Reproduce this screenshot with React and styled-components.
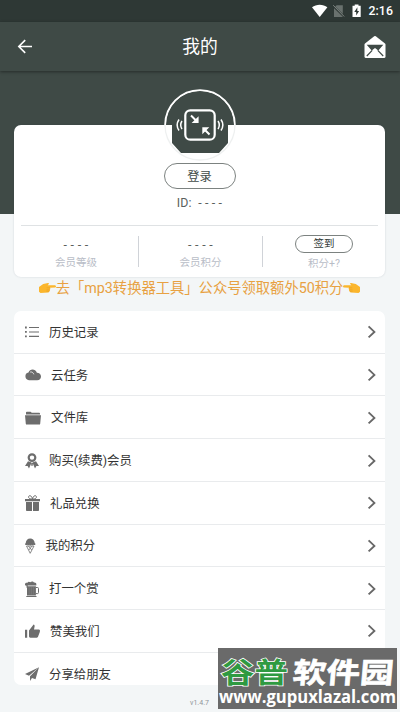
import React from 'react';
import styled, {createGlobalStyle} from 'styled-components'

const GlobalStyle = createGlobalStyle`
*{box-sizing:border-box;}
body{
margin:0;
background:#f3f6f7;
font-family:Roboto,"Noto Sans CJK SC",sans-serif;
overflow:hidden;
}
button{font-family:inherit;padding:0;}
svg{display:block;flex:none;}
`

const Page = styled.div`
position:relative;
display:flex;
flex-direction:column;
width:400px;
height:712px;
overflow:hidden;
`
const StatusBar = styled.div`
display:flex;
align-items:center;
justify-content:flex-end;
height:22px;
padding-right:7px;
background:#2e3835;
color:#fff;
font-size:12.3px;
font-weight:500;
`
const Clock = styled.span`
margin-left:6px;
letter-spacing:.1px;
`
const Toolbar = styled.header`
display:flex;
flex:none;
align-items:center;
justify-content:space-between;
height:49px;
padding:0 14px 0 17px;
background:#3f4a46;
box-shadow:0 1px 3px rgba(0,0,0,.4);
z-index:1;
`
const Title = styled.h1`
margin:0;
padding:1px 0 0 3px;
color:#fff;
font-size:17.8px;
line-height:24px;
font-weight:400;
`
const Content = styled.main`
display:flex;
flex:1;
flex-direction:column;
padding:54px 15px 0 14px;
background:linear-gradient(#3f4a46 143px,#f3f6f7 143px);
`
const Card = styled.section`
display:flex;
flex:none;
flex-direction:column;
align-items:center;
height:152px;
border-radius:7px;
background:#fff;
box-shadow:0 0 2px rgba(40,60,80,.18);
`
const Avatar = styled.div`
height:72px;
margin-top:-36px;
`
const LoginButton = styled.button`
width:72px;
height:26px;
margin-top:2px;
padding-top:2px;
border:1px solid #7c8280;
border-radius:13px;
background:#fff;
color:#414b48;
font-size:12.3px;
line-height:20px;
`
const UserId = styled.div`
height:16px;
margin-top:6px;
color:#5a5f5d;
font-size:12.4px;
line-height:16px;
letter-spacing:.15px;
white-space:pre;
`
const Divider = styled.hr`
width:357px;
height:1px;
margin:14px 0 0;
border:0;
background:#dfe2e4;
`
const Stats = styled.div`
display:grid;
grid-template-columns:125px 124px 122px;
margin-top:10px;
`
const Stat = styled.div`
display:flex;
flex-direction:column;
align-items:center;
height:31px;
border-right:${({$last})=>$last?'none':'1px solid #d0d3d8'};
color:#b9bdc7;
font-size:10.5px;
`
const StatValue = styled.span`
height:18px;
color:#5a5f5d;
font-size:12.4px;
line-height:17px;
letter-spacing:.3px;
`
const StatLabel = styled.span`
margin-top:1px;
line-height:17px;
`
const SignButton = styled.button`
height:18px;
width:58px;
margin-top:-1px;
margin-bottom:1px;
border:1px solid #7c8280;
border-radius:10px;
background:#fff;
color:#333b38;
font-size:10.5px;
line-height:16px;
`
const Notice = styled.div`
display:flex;
flex:none;
align-items:center;
justify-content:center;
height:22px;
color:#e8a142;
font-size:14.3px;
line-height:20px;
white-space:nowrap;
`
const Menu = styled.ul`
flex:none;
height:374px;
margin:12px 0 0;
padding:0;
border-radius:7px;
background:#fff;
list-style:none;
overflow:hidden;
`
const Row = styled.li`
display:flex;
align-items:center;
gap:10px;
height:42.72px;
padding:1px 7px 0 11px;
border-bottom:1px solid #e9ebed;
color:#333;
font-size:12.4px;
`
const RowLabel = styled.span`
flex:1;
padding-top:1px;
line-height:18px;
`
const Version = styled.footer`
margin-top:14px;
color:#8e9499;
font-size:7px;
line-height:9px;
text-align:center;
`
const Watermark = styled.div`
position:absolute;
left:218px;
top:648px;
display:flex;
flex-direction:column;
width:179px;
height:61px;
background:#6a6a6a;
color:#fff;
`
const SiteName = styled.svg`
width:179px;
height:42px;
overflow:visible;
font-family:"Noto Sans CJK SC",sans-serif;
font-weight:700;
font-size:28.5px;
`
const SiteUrl = styled.svg`
width:179px;
height:19px;
overflow:visible;
font-family:"Open Sans",sans-serif;
font-weight:700;
font-size:17px;
`

const Glyph = ({w,h=16,children}) => (
    <svg width={w} height={h} viewBox={`0 0 ${w} ${h}`} fill='#6d6d6d'>{children}</svg>
)

const ListIcon = () => (
    <Glyph w={14}>
        <path d='M0 2.6h1.8v1.8H0zM0 7h1.8v1.8H0zM0 11.4h1.8v1.8H0zM4 3h10v1.1H4zM4 7.4h10v1.1H4zM4 11.8h10v1.1H4z'/>
    </Glyph>
)
const CloudIcon = () => (
    <Glyph w={16}>
        <path d='M4 13.2a3.9 3.9 0 0 1-.5-7.7C4.6 1.7 10.2 1.2 11.9 5.7c2.4.1 4.1 1.6 4.1 3.8 0 2.1-1.5 3.7-3.8 3.7z'/>
        <path d='M5.2 5c1.8-.3 3.1.7 3.6 2.3' fill='none' stroke='#fff' strokeWidth='.8'/>
    </Glyph>
)
const FolderIcon = () => (
    <Glyph w={16}>
        <path d='M1 4.4V2.5c0-.5.3-.8.8-.8h3.8l1.2 1h7.4c.5 0 .8.3.8.8v.9zM0 5.3h16l-.8 8.4c0 .6-.4.9-.9.9H1.7c-.5 0-.9-.3-.9-.9z'/>
    </Glyph>
)
const MedalIcon = () => (
    <Glyph w={14}>
        <circle cx='7' cy='4.6' r='3.3' fill='none' stroke='#6d6d6d' strokeWidth='2.2'/>
        <path d='M3 8.3 0 13l2.6-.1L4 15.5 6.6 9.6zM11 8.3l3 4.7-2.6-.1-1.4 2.6-2.6-5.9zM6 10h2l-.5 3h-1z'/>
    </Glyph>
)
const GiftIcon = () => (
    <Glyph w={15}>
        <path d='M0 4.1h15v2.2H0zM1 7h6v9H1.8c-.5 0-.8-.3-.8-.8zM8 7h6v8.2c0 .5-.3.8-.8.8H8z'/>
        <path d='M7.2 4C2.8 4.4 2.8.5 5 .7 6.3.8 7.2 2.4 7.5 4 7.8 2.4 8.7.8 10 .7c2.2-.2 2.2 3.7-2.2 3.3' fill='none' stroke='#6d6d6d' strokeWidth='1'/>
    </Glyph>
)
const IceCreamIcon = () => (
    <Glyph w={10.5}>
        <path d='M.5 6.9C-.2 6.5 0 5.4.7 5.2 1 2.5 2.6.6 5.2.6s4.3 1.9 4.6 4.6c.8.2.9 1.3.2 1.7-.8.5-1.5 0-1.8-.2-.5.8-1.3.8-1.8.1-.5.8-1.7.8-2.3 0-.5.7-1.4.6-1.8-.1-.3.4-.9.6-1.8.2z'/>
        <path d='m1.5 8 3.7 7.3L9 8zM3.4 8l3.3 4M7.1 8l-3.3 4' fill='none' stroke='#6d6d6d' strokeWidth='.8'/>
    </Glyph>
)
const BeerIcon = () => (
    <Glyph w={14}>
        <path d='M0 4.2C-.3 2.5 1 1.6 2.2 1.9 2.9.6 4.4.5 5.2 1.3 6.3.1 8.4.3 8.9 1.5c1.7-.4 2.7.8 2.4 2.3v.7H2.7v2.2H1.5V4.8zM2 5.3h8.9v9.2H2zM1.3 15h10.2v1H1.3z'/>
        <path d='M11 6.5h1.5c.7 0 1 .4 1 1v4c0 .7-.4 1.1-1 1.1H11' fill='none' stroke='#6d6d6d' strokeWidth='1'/>
        <path d='M4.2 6v7.5M6.4 6v7.5M8.6 6v7.5' stroke='#858585' strokeWidth='.5'/>
    </Glyph>
)
const ThumbIcon = () => (
    <Glyph w={15}>
        <path d='M0 6.8h2.2v7.9H0zM4 7.5 8.6 1.6c.8.4 1.2 1 1 1.8L9 6.4h4.6c.9 0 1.4.6 1.4 1.4l-.2 1.2-1.7 4.6c-.2.7-.6 1.1-1.4 1.1H5.4c-.9 0-1.4-.6-1.4-1.4z'/>
    </Glyph>
)
const PlaneIcon = () => (
    <Glyph w={14}>
        <path d='M14 1.3 0 8l4 1.8zM14 1.3 5 10.2v4.7l2-3 3.5 1.4z'/>
    </Glyph>
)
const ArrowRight = () => (
    <svg width='11' height='14' viewBox='0 0 11 14' fill='none' stroke='#686868' strokeWidth='1.9'>
        <path d='m1.6 1.4 5.8 5.5-5.8 5.5'/>
    </svg>
)
const BackIcon = () => (
    <svg width='16' height='16' viewBox='0 0 16 16' fill='none' stroke='#fff' strokeWidth='1.6'>
        <path d='M15 7.5H2M8.2 1.1 1.8 7.5l6.4 6.4'/>
    </svg>
)
const MailIcon = () => (
    <svg width='22' height='24' viewBox='0 0 22 24'>
        <path d='M1 8.5 10.2 1.2q.8-.5 1.6 0L21 8.5q.5.5.5 1.3v11.7q0 1.5-1.5 1.5H2q-1.5 0-1.5-1.5V9.8Q.5 9 1 8.5z' fill='#fff'/>
        <path d='M2.7 9.8h16.6L14.3 15.6 11 12.9l-3.3 2.7z' fill='#3f4a46'/>
        <path d='m2.8 21 5.4-5.7M19.2 21l-5.4-5.7' stroke='#3f4a46' strokeWidth='1.2'/>
    </svg>
)
const StatusIcons = () => (
    <svg width='50' height='14' viewBox='0 0 50 14'>
        <path d='M0 3.3C4.2-.2 11.2-.2 15.4 3.3L7.7 13z' fill='#fff'/>
        <path d='M24.6 1.2h6.2V13H22V4z' fill='#69716e'/>
        <path d='m20.5 1.2 11.8 11.6' stroke='#2e3835' strokeWidth='2'/>
        <path d='m21.2 1.2 11 11.3' stroke='#7c8380' strokeWidth='1'/>
        <path d='M40.5 1.7h2.2V.5h3.8v1.2h2.2V13h-8.2z' fill='#fff'/>
        <path d='M45.4 3.2 42.3 8h1.9v3.5L47.1 7h-1.8z' fill='#2e3835'/>
    </svg>
)
const Logo = () => (
    <svg width='72' height='72' viewBox='0 0 72 72'>
        <circle cx='36' cy='36' r='35' fill='#fff'/>
        <path d='M2 36a34 34 0 0 1 68 0h-6v18l-9 10H17L8 54V36z' fill='#3f4a46'/>
        <path d='M1 36a35 35 0 0 1 70 0' fill='none' stroke='#fff' strokeWidth='1.6'/>
        <path d='M1 36a35 35 0 0 0 70 0' fill='none' stroke='#eef0f0' strokeWidth='1.3'/>
        <rect x='21.3' y='21.3' width='29.4' height='29.4' rx='5' fill='none' stroke='#fff' strokeWidth='2.2'/>
        <g stroke='#fff' strokeWidth='2' fill='none'>
            <path d='m27 26.5 5 5M45.5 45.5l-5-5'/>
            <path d='M18 32q-2.6 4 0 8M15 30.5q-3.7 5.5 0 11M54 32q2.6 4 0 8M57 30.5q3.7 5.5 0 11' strokeWidth='1.5'/>
        </g>
        <path d='M34.6 27.2v6.9h-7zM38.3 38.2h7l-7 7z' fill='#fff'/>
    </svg>
)
const Hand = ({flip}) => (
    <svg width='17' height='14' viewBox='0 0 17 14'>
        <g transform={flip?undefined:'translate(17 0) scale(-1 1)'}>
            <path d='M17 6 12.8 3 8 1.9q-1.4-.1-.8 1.1L8.3 4.3H1q-1 .2-1 1.1t1 1.1l5 .3q-1 1.1.2 1.9-.6 1 .5 1.6-.2 1 1.1 1.3l7.7.4 1.5-1.3z' fill='#fbb62d'/>
            <path d='M9.3 6.8H6M9.5 8.8H6.3M9.5 10.3H6.7' stroke='#e49b22' strokeWidth='.5'/>
        </g>
    </svg>
)

const items = [
    {name:'历史记录',Icon:ListIcon},
    {name:'云任务',Icon:CloudIcon},
    {name:'文件库',Icon:FolderIcon},
    {name:'购买(续费)会员',Icon:MedalIcon},
    {name:'礼品兑换',Icon:GiftIcon},
    {name:'我的积分',Icon:IceCreamIcon},
    {name:'打一个赏',Icon:BeerIcon},
    {name:'赞美我们',Icon:ThumbIcon},
    {name:'分享给朋友',Icon:PlaneIcon},
]

const App = () => {
    return(
        <>
        <GlobalStyle/>
        <Page>
            <StatusBar><StatusIcons/><Clock>2:16</Clock></StatusBar>
            <Toolbar>
                <BackIcon/>
                <Title>我的</Title>
                <MailIcon/>
            </Toolbar>
            <Content>
                <Card>
                    <Avatar><Logo/></Avatar>
                    <LoginButton>登录</LoginButton>
                    <UserId>ID:  - - - -</UserId>
                    <Divider/>
                    <Stats>
                        <Stat>
                            <StatValue>- - - -</StatValue>
                            <StatLabel>会员等级</StatLabel>
                        </Stat>
                        <Stat>
                            <StatValue>- - - -</StatValue>
                            <StatLabel>会员积分</StatLabel>
                        </Stat>
                        <Stat $last>
                            <SignButton>签到</SignButton>
                            <StatLabel>积分+?</StatLabel>
                        </Stat>
                    </Stats>
                </Card>
                <Notice><Hand/>去「mp3转换器工具」公众号领取额外50积分<Hand flip/></Notice>
                <Menu>
                    {items.map(({name,Icon})=>(
                        <Row key={name}>
                            <Icon/>
                            <RowLabel>{name}</RowLabel>
                            <ArrowRight/>
                        </Row>
                    ))}
                </Menu>
                <Version>v1.4.7</Version>
            </Content>
            <Watermark>
                <SiteName viewBox='0 0 179 42'>
                    <text x='3' y='35' textLength='67' lengthAdjust='spacingAndGlyphs' fill='#2f9a41' stroke='#fff' strokeWidth='1.6' paintOrder='stroke'>谷普</text>
                    <text x='77' y='35' textLength='101' lengthAdjust='spacingAndGlyphs' fill='#fff' stroke='#fff' strokeWidth='.6' transform='skewX(-5)'>软件园</text>
                </SiteName>
                <SiteUrl viewBox='0 0 179 19'>
                    <text x='1' y='13' textLength='177' lengthAdjust='spacingAndGlyphs' fill='#fff'>www.gupuxlazal.com</text>
                </SiteUrl>
            </Watermark>
        </Page>
        </>
    )
}
export default App;
